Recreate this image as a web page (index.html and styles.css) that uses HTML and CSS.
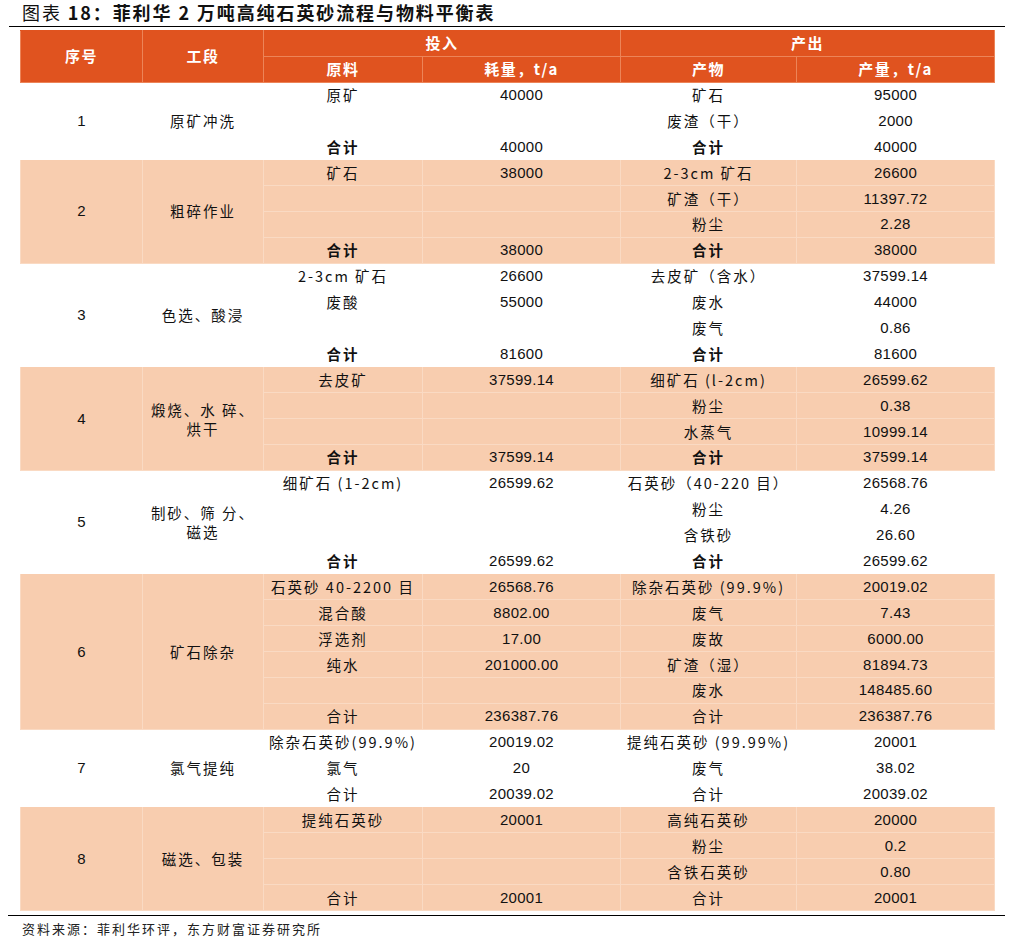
FILE: index.html
```html
<!DOCTYPE html>
<html lang="zh-CN">
<head>
<meta charset="utf-8">
<title>菲利华 2 万吨高纯石英砂流程与物料平衡表</title>
<link rel="stylesheet" href="styles.css">
</head>
<body>
<div class="page">
  <div class="title"><span class="lbl">图表</span> <span class="bold">18：菲利华 2 万吨高纯石英砂流程与物料平衡表</span></div>
  <table class="tbl">
    <colgroup>
      <col class="c1"><col class="c2"><col class="c3"><col class="c4"><col class="c5"><col class="c6">
    </colgroup>
    <thead>
      <tr><th rowspan="2">序号</th><th rowspan="2">工段</th><th colspan="2">投入</th><th colspan="2">产出</th></tr>
      <tr><th>原料</th><th>耗量，t/a</th><th>产物</th><th>产量，t/a</th></tr>
    </thead>
    <tbody class="w">
      <tr><td class="num" rowspan="3">1</td><td class="txt" rowspan="3">原矿冲洗</td><td class="txt">原矿</td><td class="num">40000</td><td class="txt">矿石</td><td class="num">95000</td></tr>
      <tr><td></td><td></td><td class="txt">废渣（干）</td><td class="num">2000</td></tr>
      <tr><td class="txt b">合计</td><td class="num">40000</td><td class="txt b">合计</td><td class="num">40000</td></tr>
    </tbody>
    <tbody class="p">
      <tr><td class="num" rowspan="4">2</td><td class="txt" rowspan="4">粗碎作业</td><td class="txt">矿石</td><td class="num">38000</td><td class="txt">2-3cm 矿石</td><td class="num">26600</td></tr>
      <tr><td></td><td></td><td class="txt">矿渣（干）</td><td class="num">11397.72</td></tr>
      <tr><td></td><td></td><td class="txt">粉尘</td><td class="num">2.28</td></tr>
      <tr><td class="txt b">合计</td><td class="num">38000</td><td class="txt b">合计</td><td class="num">38000</td></tr>
    </tbody>
    <tbody class="w">
      <tr><td class="num" rowspan="4">3</td><td class="txt" rowspan="4">色选、酸浸</td><td class="txt">2-3cm 矿石</td><td class="num">26600</td><td class="txt">去皮矿（含水）</td><td class="num">37599.14</td></tr>
      <tr><td class="txt">废酸</td><td class="num">55000</td><td class="txt">废水</td><td class="num">44000</td></tr>
      <tr><td></td><td></td><td class="txt">废气</td><td class="num">0.86</td></tr>
      <tr><td class="txt b">合计</td><td class="num">81600</td><td class="txt b">合计</td><td class="num">81600</td></tr>
    </tbody>
    <tbody class="p">
      <tr><td class="num" rowspan="4">4</td><td class="txt two" rowspan="4">煅烧、水 碎、<br>烘干</td><td class="txt">去皮矿</td><td class="num">37599.14</td><td class="txt">细矿石 (l-2cm)</td><td class="num">26599.62</td></tr>
      <tr><td></td><td></td><td class="txt">粉尘</td><td class="num">0.38</td></tr>
      <tr><td></td><td></td><td class="txt">水蒸气</td><td class="num">10999.14</td></tr>
      <tr><td class="txt b">合计</td><td class="num">37599.14</td><td class="txt b">合计</td><td class="num">37599.14</td></tr>
    </tbody>
    <tbody class="w">
      <tr><td class="num" rowspan="4">5</td><td class="txt two" rowspan="4">制砂、筛 分、<br>磁选</td><td class="txt">细矿石 (1-2cm)</td><td class="num">26599.62</td><td class="txt">石英砂（40-220 目）</td><td class="num">26568.76</td></tr>
      <tr><td></td><td></td><td class="txt">粉尘</td><td class="num">4.26</td></tr>
      <tr><td></td><td></td><td class="txt">含铁砂</td><td class="num">26.60</td></tr>
      <tr><td class="txt b">合计</td><td class="num">26599.62</td><td class="txt b">合计</td><td class="num">26599.62</td></tr>
    </tbody>
    <tbody class="p">
      <tr><td class="num" rowspan="6">6</td><td class="txt" rowspan="6">矿石除杂</td><td class="txt">石英砂 40-2200 目</td><td class="num">26568.76</td><td class="txt">除杂石英砂 (99.9%)</td><td class="num">20019.02</td></tr>
      <tr><td class="txt">混合酸</td><td class="num">8802.00</td><td class="txt">废气</td><td class="num">7.43</td></tr>
      <tr><td class="txt">浮选剂</td><td class="num">17.00</td><td class="txt">废故</td><td class="num">6000.00</td></tr>
      <tr><td class="txt">纯水</td><td class="num">201000.00</td><td class="txt">矿渣（湿）</td><td class="num">81894.73</td></tr>
      <tr><td></td><td></td><td class="txt">废水</td><td class="num">148485.60</td></tr>
      <tr><td class="txt">合计</td><td class="num">236387.76</td><td class="txt">合计</td><td class="num">236387.76</td></tr>
    </tbody>
    <tbody class="w">
      <tr><td class="num" rowspan="3">7</td><td class="txt" rowspan="3">氯气提纯</td><td class="txt">除杂石英砂(99.9%)</td><td class="num">20019.02</td><td class="txt">提纯石英砂 (99.99%)</td><td class="num">20001</td></tr>
      <tr><td class="txt">氯气</td><td class="num">20</td><td class="txt">废气</td><td class="num">38.02</td></tr>
      <tr><td class="txt">合计</td><td class="num">20039.02</td><td class="txt">合计</td><td class="num">20039.02</td></tr>
    </tbody>
    <tbody class="p">
      <tr><td class="num" rowspan="4">8</td><td class="txt" rowspan="4">磁选、包装</td><td class="txt">提纯石英砂</td><td class="num">20001</td><td class="txt">高纯石英砂</td><td class="num">20000</td></tr>
      <tr><td></td><td></td><td class="txt">粉尘</td><td class="num">0.2</td></tr>
      <tr><td></td><td></td><td class="txt">含铁石英砂</td><td class="num">0.80</td></tr>
      <tr><td class="txt">合计</td><td class="num">20001</td><td class="txt">合计</td><td class="num">20001</td></tr>
    </tbody>
  </table>
  <div class="source">资料来源：菲利华环评，东方财富证券研究所</div>
</div>
</body>
</html>
```

FILE: styles.css
```css
html, body {
  margin: 0;
  padding: 0;
  background: #ffffff;
}

body {
  font-family: "Liberation Sans", "Noto Sans CJK SC", sans-serif;
  color: #111111;
}

.page {
  width: 1015px;
}

.title {
  margin: 0 10px 0 9px;
  padding-left: 13px;
  height: 25.5px;
  line-height: 24px;
  font-size: 18px;
  font-family: "Noto Sans CJK SC", sans-serif;
  letter-spacing: 1.9px;
  border-bottom: 1.5px solid #000000;
  color: #111111;
}

.title .lbl {
  font-weight: 400;
}

.title .bold {
  font-weight: 700;
}

.tbl {
  margin: 3px 0 0 20px;
  width: 974px;
  border-collapse: collapse;
  table-layout: fixed;
}

.c1 { width: 122px; }
.c2 { width: 121px; }
.c3 { width: 159px; }
.c4 { width: 198px; }
.c5 { width: 176px; }
.c6 { width: 198px; }

.tbl th {
  background: #e0531f;
  color: #ffffff;
  font-family: "Noto Sans CJK SC", sans-serif;
  font-weight: 700;
  font-size: 15px;
  letter-spacing: 1.5px;
  height: 25px;
  padding: 0;
  line-height: 18px;
  border: 1px solid #ec8458;
  text-align: center;
  vertical-align: middle;
}

.tbl thead tr:first-child th {
  border-top-color: #e0531f;
}

.tbl td {
  height: 24.9px;
  padding: 0;
  text-align: center;
  vertical-align: middle;
  line-height: 18px;
  font-size: 15px;
}

.tbl tbody.w td {
  background: #ffffff;
  border: 1px solid #ffffff;
}

.tbl tbody.p td {
  background: #f8cdaf;
  border: 1px solid #fadac3;
}

.tbl td.txt {
  font-family: "Noto Sans CJK SC", sans-serif;
  letter-spacing: 2px;
  font-size: 14.5px;
}

.tbl td.num {
  font-family: "Liberation Sans", "Noto Sans CJK SC", sans-serif;
  font-size: 15px;
  letter-spacing: 0.3px;
}

.tbl td.b {
  font-weight: 700;
}

.tbl td.two {
  line-height: 19px;
}

.source {
  margin: 3.5px 10px 0 8px;
  padding: 5px 0 0 14px;
  border-top: 1.5px solid #000000;
  font-family: "Noto Sans CJK SC", sans-serif;
  font-size: 13px;
  letter-spacing: 2px;
  line-height: 16px;
  color: #222222;
}
```
